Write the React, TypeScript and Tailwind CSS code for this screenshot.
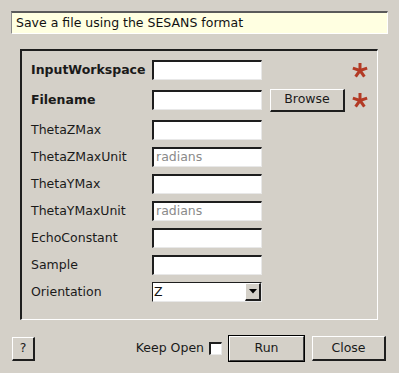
import React from "react";

const font = { fontFamily: '"DejaVu Sans", "Liberation Sans", sans-serif' };

function Sunken({ placeholder }: { placeholder?: string }) {
  return (
    <div className="w-[110px] h-[20px] bg-white border-t-2 border-l-2 border-t-[#1e1e1e] border-l-[#1e1e1e] border-b border-r border-b-[#e8e8e8] border-r-[#e8e8e8] flex items-center pl-[2px] text-[12.5px] text-[#8a8a8a] leading-none">
      {placeholder ?? ""}
    </div>
  );
}

function Star() {
  const cx = 8;
  const cy = 7.5;
  const r = 7.5;
  const angles = [90, 18, 162, -54, 234];
  return (
    <div className="w-[16px] h-[16px] flex items-center justify-center">
      <svg width="16" height="15" viewBox="0 0 16 15">
        <g stroke="#b33a25" strokeWidth="3" strokeLinecap="butt">
          {angles.map((a) => {
            const rad = (a * Math.PI) / 180;
            return (
              <line
                key={a}
                x1={cx}
                y1={cy}
                x2={cx + r * Math.cos(rad)}
                y2={cy - r * Math.sin(rad)}
              />
            );
          })}
        </g>
      </svg>
    </div>
  );
}

function Row({
  label,
  bold,
  children,
  className,
}: {
  label: string;
  bold?: boolean;
  children: React.ReactNode;
  className?: string;
}) {
  return (
    <div className={"flex items-center " + (className ?? "")}>
      <div className={"w-[121px] text-[12.5px] text-[#1a1a1a] " + (bold ? "font-bold" : "")}>{label}</div>
      {children}
    </div>
  );
}

export default function App() {
  return (
    <div className="w-[399px] h-[373px] bg-[#d4d0c8] flex flex-col" style={font}>
      <div className="px-[11px] pt-[11px]">
        <div className="h-[23px] bg-[#ffffe1] border-t-2 border-l border-t-[#5a5a5a] border-l-[#8a8a8a] border-b border-r border-b-white border-r-white flex items-center pl-[4px] text-[12.5px] text-[#111]">
          Save a file using the SESANS format
        </div>
      </div>
      <div className="ml-[20px] mr-[21px] mt-[15px] h-[271px] border-t-2 border-l-2 border-t-[#1e1e1e] border-l-[#1e1e1e] border-b border-r border-b-white border-r-white pl-[9px] pt-[7px] flex flex-col">
        <Row label="InputWorkspace" bold className="h-[24px]">
          <Sunken />
          <div className="w-[90px]" />
          <Star />
        </Row>
        <Row label="Filename" bold className="h-[24px] mt-[6px]">
          <Sunken />
          <div className="w-[8px]" />
          <button className="w-[75px] h-[23px] bg-[#d4d0c8] border-t border-l border-t-white border-l-white border-b-2 border-r-2 border-b-[#1e1e1e] border-r-[#1e1e1e] text-[12.5px] text-[#1a1a1a] flex items-center justify-center">
            Browse
          </button>
          <div className="w-[7px]" />
          <Star />
        </Row>
        <Row label="ThetaZMax" className="h-[20px] mt-[8px]">
          <Sunken />
        </Row>
        <Row label="ThetaZMaxUnit" className="h-[20px] mt-[7px]">
          <Sunken placeholder="radians" />
        </Row>
        <Row label="ThetaYMax" className="h-[20px] mt-[7px]">
          <Sunken />
        </Row>
        <Row label="ThetaYMaxUnit" className="h-[20px] mt-[7px]">
          <Sunken placeholder="radians" />
        </Row>
        <Row label="EchoConstant" className="h-[20px] mt-[7px]">
          <Sunken />
        </Row>
        <Row label="Sample" className="h-[20px] mt-[7px]">
          <Sunken />
        </Row>
        <Row label="Orientation" className="h-[20px] mt-[7px]">
          <div className="w-[110px] h-[20px] bg-white border-t border-l border-t-[#1e1e1e] border-l-[#1e1e1e] border-b border-r border-b-[#e8e8e8] border-r-[#e8e8e8] flex items-center justify-between text-[12.5px] text-[#111]">
            <span className="pl-[1px]">Z</span>
            <div className="w-[16px] h-[18px] bg-[#d4d0c8] border-t border-l border-t-white border-l-white border-b-2 border-r-2 border-b-[#1e1e1e] border-r-[#1e1e1e] flex items-center justify-center">
              <svg width="8" height="5" viewBox="0 0 8 5">
                <polygon points="0,0 8,0 4,4.5" fill="#000" />
              </svg>
            </div>
          </div>
        </Row>
      </div>
      <div className="flex items-center mt-[15px] pl-[12px] pr-[13px] h-[27px]">
        <button className="w-[23px] h-[24px] bg-[#d4d0c8] border-t border-l border-t-white border-l-white border-b-2 border-r-2 border-b-[#1e1e1e] border-r-[#1e1e1e] text-[12.5px] text-[#1a1a1a] flex items-center justify-center">
          ?
        </button>
        <div className="flex-1" />
        <span className="text-[12.5px] text-[#1a1a1a]">Keep Open</span>
        <div className="ml-[5px] w-[13px] h-[13px] bg-white border-t-2 border-l-2 border-t-[#1e1e1e] border-l-[#1e1e1e] border-b border-r border-b-[#e8e8e8] border-r-[#e8e8e8]" />
        <button className="ml-[6px] w-[77px] h-[27px] bg-[#d4d0c8] border border-black flex items-center justify-center">
          <div className="w-full h-full border-t border-l border-t-white border-l-white border-b border-r border-b-[#404040] border-r-[#404040] text-[12.5px] text-[#1a1a1a] flex items-center justify-center">
            Run
          </div>
        </button>
        <button className="ml-[7px] w-[74px] h-[25px] bg-[#d4d0c8] border-t border-l border-t-white border-l-white border-b-2 border-r-2 border-b-[#1e1e1e] border-r-[#1e1e1e] text-[12.5px] text-[#1a1a1a] flex items-center justify-center">
          Close
        </button>
      </div>
    </div>
  );
}
